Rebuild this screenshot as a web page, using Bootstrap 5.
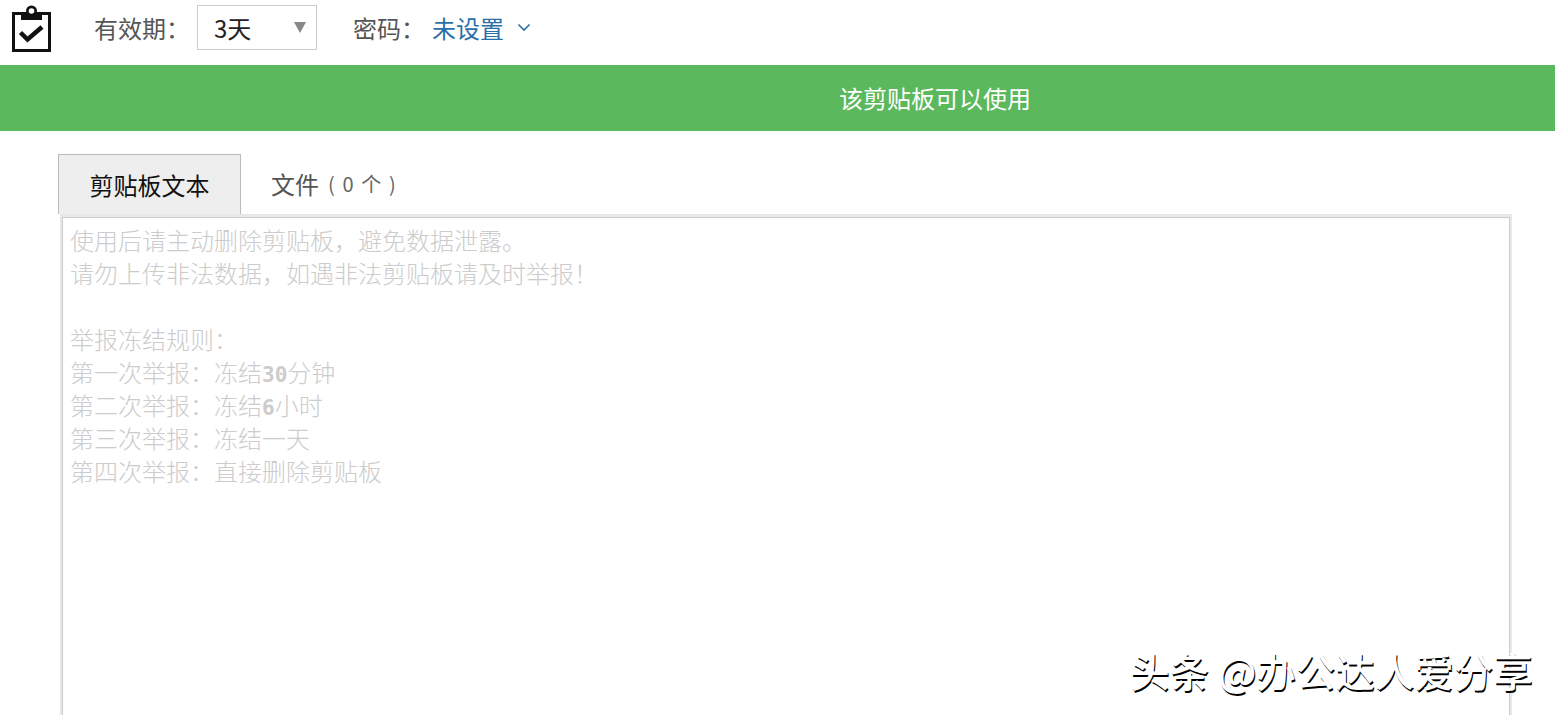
<!DOCTYPE html>
<html lang="zh-CN">
<head>
    <meta charset="UTF-8">
    <title>剪贴板</title>
    <link href="https://cdn.jsdelivr.net/npm/bootstrap@5.3.2/dist/css/bootstrap.min.css" rel="stylesheet">
    <style>
        body { font-family: "Noto Sans CJK SC", "Liberation Sans", sans-serif; color: #555; overflow: hidden; height: 715px; position: relative; }
        .top-bar { height: 65px; padding: 0 0 10px 11px; font-size: 24px; }
        .clip-icon { width: 42px; height: 50px; margin-right: 41px; }
        .expire-box { width: 120px; height: 45px; margin: 0 36px 0 7px; padding: 0 10px 0 16px; border: 1px solid #ccc; color: #222; }
        .expire-arrow { width: 0; height: 0; border-left: 6.5px solid transparent; border-right: 6.5px solid transparent; border-top: 11px solid #888; margin-bottom: 1px; }
        .pwd-link { color: #2a6fa8; margin-left: 7px; text-decoration: none; }
        .pwd-chevron { width: 14px; height: 9px; margin-left: 13px; }
        .status-strip { height: 66px; background: #5cb85c; color: #fff; font-size: 24px; padding-left: 315px; }
        .clip-area { padding: 23px 43px 0 58px; }
        .clip-tabs { height: 60px; font-size: 24px; }
        .clip-tab-on { width: 183px; background: #eee; color: #111; border: 1px solid #bbb; border-bottom: 0; }
        .clip-tab-off { padding-left: 30px; color: #555; }
        .tab-count { font-size: 20px; margin-left: 9px; color: #666; letter-spacing: 1.6px; }
        .text-wrap { margin-left: 2px; border: 2px solid #e8e8e8; border-top-width: 3px; height: 520px; }
        .text-inner { border: 1px solid #ccc; border-bottom: 0; height: 100%; padding: 5px 7px; font-size: 24px; line-height: 33px; color: #ccc; font-weight: 300; }
        .text-line { height: 33px; white-space: nowrap; }
        .num-char { font-family: "DejaVu Sans Mono", monospace; font-size: 21px; font-weight: 700; }
        .water-mark { position: absolute; left: 1130px; top: 644px; font-size: 39.5px; line-height: 52px; color: #fff; text-shadow: 1px 2px 0 #000; white-space: nowrap; font-weight: 500; }
    </style>
</head>
<body>
<div class="top-bar d-flex align-items-center">
    <svg class="clip-icon" viewBox="0 0 42 50">
        <rect x="2.5" y="10.5" width="36" height="37" fill="none" stroke="#111" stroke-width="3"/>
        <rect x="10" y="9" width="21" height="8" fill="#111"/>
        <circle cx="20.5" cy="8" r="5.5" fill="#111"/>
        <circle cx="20.5" cy="8" r="2.8" fill="#fff"/>
        <path d="M9.5 29.5 L16.5 36.5 L31 24" fill="none" stroke="#111" stroke-width="4.5"/>
    </svg>
    <span>有效期&#xFF1A;</span>
    <div class="expire-box d-flex align-items-center justify-content-between">
        <span>3天</span>
        <span class="expire-arrow"></span>
    </div>
    <span>密码&#xFF1A;</span>
    <a class="pwd-link" href="#">未设置</a>
    <svg class="pwd-chevron" viewBox="0 0 14 9"><path d="M1.5 1.5 L7 7 L12.5 1.5" fill="none" stroke="#2a6fa8" stroke-width="1.6"/></svg>
</div>
<div class="status-strip d-flex align-items-center justify-content-center">该剪贴板可以使用</div>
<div class="clip-area">
    <div class="clip-tabs d-flex">
        <div class="clip-tab-on d-flex align-items-center justify-content-center">剪贴板文本</div>
        <div class="clip-tab-off d-flex align-items-center">文件<span class="tab-count">( 0 个 )</span></div>
    </div>
    <div class="text-wrap">
        <div class="text-inner">
            <div class="text-line">使用后请主动删除剪贴板&#xFF0C;避免数据泄露。</div>
            <div class="text-line">请勿上传非法数据&#xFF0C;如遇非法剪贴板请及时举报&#xFF01;</div>
            <div class="text-line"></div>
            <div class="text-line">举报冻结规则&#xFF1A;</div>
            <div class="text-line d-flex align-items-baseline"><span>第一次举报&#xFF1A;冻结</span><span class="num-char">30</span><span>分钟</span></div>
            <div class="text-line d-flex align-items-baseline"><span>第二次举报&#xFF1A;冻结</span><span class="num-char">6</span><span>小时</span></div>
            <div class="text-line">第三次举报&#xFF1A;冻结一天</div>
            <div class="text-line">第四次举报&#xFF1A;直接删除剪贴板</div>
        </div>
    </div>
</div>
<div class="water-mark">头条 @办公达人爱分享</div>
<script src="https://cdn.jsdelivr.net/npm/bootstrap@5.3.2/dist/js/bootstrap.bundle.min.js"></script>
</body>
</html>
